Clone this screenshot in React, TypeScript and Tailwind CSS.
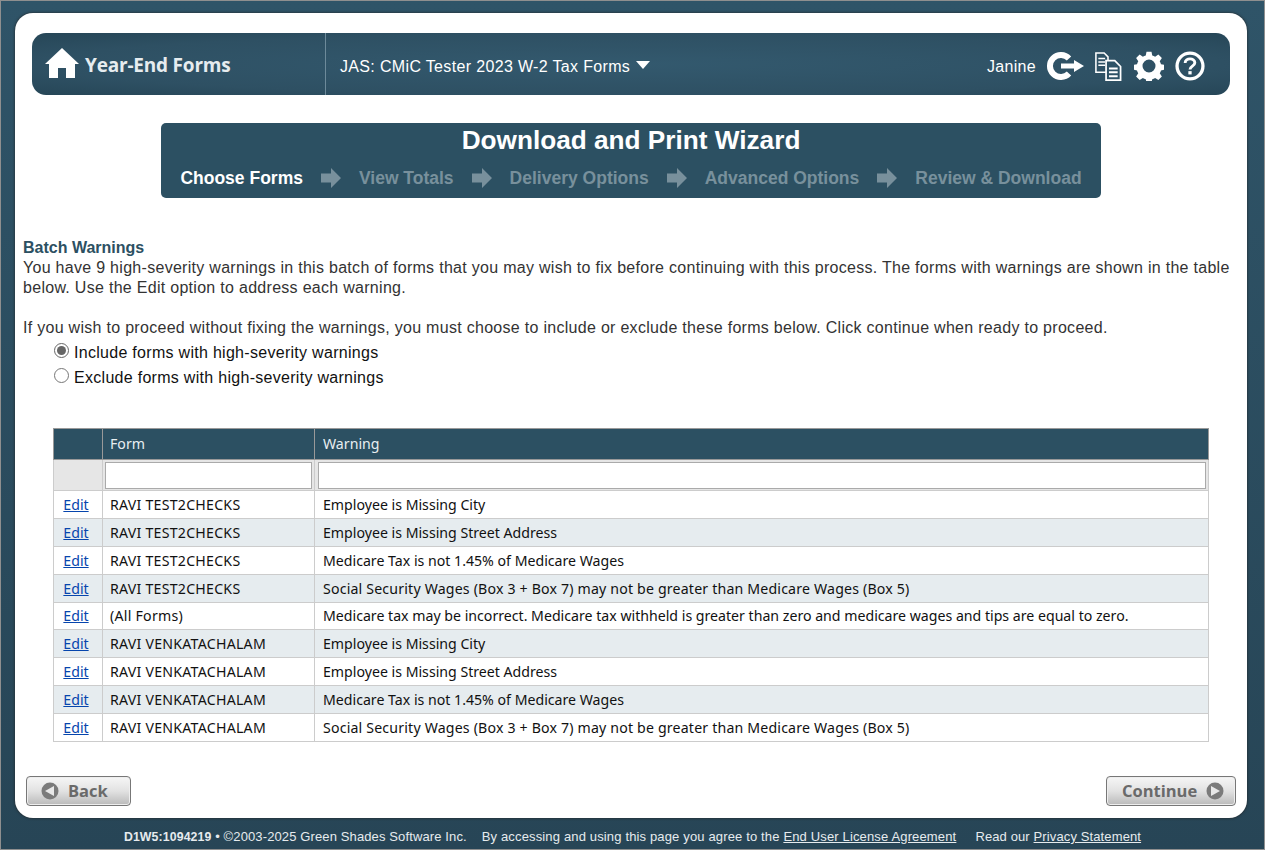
import type { ReactNode } from 'react';

const steps = ['View Totals', 'Delivery Options', 'Advanced Options', 'Review & Download'];

const rows = [
  ['RAVI TEST2CHECKS', 'Employee is Missing City'],
  ['RAVI TEST2CHECKS', 'Employee is Missing Street Address'],
  ['RAVI TEST2CHECKS', 'Medicare Tax is not 1.45% of Medicare Wages'],
  ['RAVI TEST2CHECKS', 'Social Security Wages (Box 3 + Box 7) may not be greater than Medicare Wages (Box 5)'],
  ['(All Forms)', 'Medicare tax may be incorrect. Medicare tax withheld is greater than zero and medicare wages and tips are equal to zero.'],
  ['RAVI VENKATACHALAM', 'Employee is Missing City'],
  ['RAVI VENKATACHALAM', 'Employee is Missing Street Address'],
  ['RAVI VENKATACHALAM', 'Medicare Tax is not 1.45% of Medicare Wages'],
  ['RAVI VENKATACHALAM', 'Social Security Wages (Box 3 + Box 7) may not be greater than Medicare Wages (Box 5)'],
];

function HomeIcon() {
  return (
    <svg width="34" height="30" viewBox="0 0 34 30" className="-mt-[3px] shrink-0">
      <path fill="#fff" d="M17 0 L34 16 L30 16 L30 30 L21 30 L21 20 L13 20 L13 30 L4 30 L4 16 L0 16 Z" />
    </svg>
  );
}

function LogoutIcon() {
  return (
    <svg width="38" height="28" viewBox="0 0 38 28" className="-ml-[1px]">
      <path fill="none" stroke="#fff" strokeWidth="6" d="M23 6.5 A11 11 0 1 0 23 21.5" />
      <path fill="#fff" d="M15 11.5 H28 V8 L38 14 L28 20 V16.5 H15 Z" />
    </svg>
  );
}

function DocsIcon() {
  return (
    <svg width="28" height="29" viewBox="0 0 28 30">
      <path fill="none" stroke="#fff" strokeWidth="1.6" d="M1.5 1 H10 L14 5 V21 H1.5 Z" />
      <path fill="#fff" d="M4 6 H11 V7.5 H4 Z M4 9.5 H11 V11 H4 Z M4 13 H11 V14.5 H4 Z" />
      <path fill="#2d5266" stroke="#fff" strokeWidth="1.8" d="M12 9 H21 L27 15 V29 H12 Z" />
      <path fill="#fff" d="M15 16 H24 V18 H15 Z M15 20 H24 V22 H15 Z M15 24 H24 V26 H15 Z" />
    </svg>
  );
}

function GearIcon() {
  return (
    <svg width="30" height="30" viewBox="0 0 24 24">
      <path
        fill="#fff"
        fillRule="evenodd"
        d="M10 0.5 h4 l0.6 3 a8.7 8.7 0 0 1 2.3 1 l2.6 -1.7 2.8 2.8 -1.7 2.6 a8.7 8.7 0 0 1 1 2.3 l3 0.6 v3.8 l-3 0.6 a8.7 8.7 0 0 1 -1 2.3 l1.7 2.6 -2.8 2.8 -2.6 -1.7 a8.7 8.7 0 0 1 -2.3 1 l-0.6 3 h-4 l-0.6 -3 a8.7 8.7 0 0 1 -2.3 -1 l-2.6 1.7 -2.8 -2.8 1.7 -2.6 a8.7 8.7 0 0 1 -1 -2.3 l-3 -0.6 v-3.8 l3 -0.6 a8.7 8.7 0 0 1 1 -2.3 l-1.7 -2.6 2.8 -2.8 2.6 1.7 a8.7 8.7 0 0 1 2.3 -1 Z M12 6.8 a5.2 5.2 0 1 0 0 10.4 a5.2 5.2 0 1 0 0 -10.4 Z"
      />
    </svg>
  );
}

function HelpIcon() {
  return (
    <svg width="30" height="30" viewBox="0 0 31 31">
      <circle cx="15.5" cy="15.5" r="13.4" fill="none" stroke="#fff" strokeWidth="3.4" />
      <path fill="none" stroke="#fff" strokeWidth="3" d="M10.5 12.5 C10.5 6.8 20.5 6.8 20.5 12.2 C20.5 15.6 15.5 15.6 15.5 19" />
      <rect x="13.8" y="20.8" width="3.4" height="3.4" fill="#fff" />
    </svg>
  );
}

function StepArrow() {
  return (
    <svg width="20" height="20" viewBox="0 0 19 20" className="shrink-0" preserveAspectRatio="none">
      <path fill="#78909c" d="M0 5.5 H9.5 V0 L19 10 L9.5 20 V14.5 H0 Z" />
    </svg>
  );
}

function NavButton({ className, children }: { className: string; children: ReactNode }) {
  return (
    <button
      className={`flex h-[30px] items-center gap-[9px] rounded-[4px] border border-[#777] bg-gradient-to-b from-[#f6f6f6] via-[#e2e2e2] to-[#bababa] font-['Open_Sans',sans-serif] text-[16.5px] font-bold text-[#6a6a6a] shadow-[inset_0_0_0_1px_#eee] ${className}`}
    >
      {children}
    </button>
  );
}

function Circle({ left }: { left?: boolean }) {
  return (
    <svg width="18" height="18" viewBox="0 0 18 18">
      <circle cx="9" cy="9" r="8.5" fill="#7b7b7b" />
      <path fill="#e8e8e8" d={left ? 'M13 4 V14 L4 9 Z' : 'M5 4 V14 L14 9 Z'} />
    </svg>
  );
}

export default function App() {
  return (
    <div className="flex h-[850px] w-[1265px] flex-col overflow-hidden border border-[#8f8f8f] bg-gradient-to-b from-[#2f5468] to-[#274556] font-['Liberation_Sans',sans-serif]">
      <main className="mx-[14px] mt-[12px] flex h-[805px] w-[1232px] flex-col rounded-[18px] bg-white pt-[20px] shadow-[0_0_3px_#222]">
        <header className="mx-[17px] flex h-[62px] w-[1198px] shrink-0 items-center rounded-[14px] bg-[radial-gradient(ellipse_at_center,#33596e_0%,#2e5063_70%,#264657_100%)] pt-[6px] text-white">
          <div className="-mt-[6px] flex h-[62px] w-[294px] items-center gap-[6px] border-r border-[#6d8a9a] pl-[13px]">
            <HomeIcon />
            <span className="pt-[2px] font-['Open_Sans',sans-serif] text-[19px] font-bold tracking-[-0.2px] text-[#e6ecef]">Year-End Forms</span>
          </div>
          <div className="flex items-center gap-[6px] pl-[14px] text-[16px] tracking-[0.34px]">
            JAS: CMiC Tester 2023 W-2 Tax Forms
            <span className="-mt-[4px] h-0 w-0 border-x-[7px] border-t-[8px] border-x-transparent border-t-white" />
          </div>
          <div className="ml-auto -mt-[2px] flex items-center pr-[25px]">
            <span className="mt-[2px] mr-[11px] text-[16px] tracking-[0.3px]">Janine</span>
            <LogoutIcon />
            <span className="ml-[10px]"><DocsIcon /></span>
            <span className="ml-[12px]"><GearIcon /></span>
            <span className="ml-[11px]"><HelpIcon /></span>
          </div>
        </header>

        <section className="mx-auto mt-[28px] flex h-[75px] w-[940px] shrink-0 flex-col items-center rounded-[5px] bg-[#2c5062] pt-[1px]">
          <h1 className="text-[26.2px] leading-[32px] font-bold text-white">Download and Print Wizard</h1>
          <div className="mt-[10px] flex items-center gap-[18px] text-[17.5px] leading-[24px] font-bold">
            <span className="text-white">Choose Forms</span>
            {steps.map((step) => (
              <div key={step} className="flex items-center gap-[18px]">
                <StepArrow />
                <span className="text-[#78909c]">{step}</span>
              </div>
            ))}
          </div>
        </section>

        <section className="mt-[40px] pr-[8px] pl-[8px] text-[16px] leading-[20px] tracking-[0.29px] text-[#333]">
          <h2 className="font-bold tracking-normal text-[#2c5062]">Batch Warnings</h2>
          <p>
            You have 9 high-severity warnings in this batch of forms that you may wish to fix before continuing with this process. The forms with warnings are shown in the table below. Use the Edit option to address each warning.
          </p>
          <p className="mt-[20px]">
            If you wish to proceed without fixing the warnings, you must choose to include or exclude these forms below. Click continue when ready to proceed.
          </p>
          <div className="mt-[2px] ml-[31px] text-[#111]">
            <label className="flex h-[25px] items-center gap-[5px]">
              <input type="radio" name="sev" defaultChecked className="m-0 h-[15px] w-[15px] -translate-y-[2px] accent-[#666]" />
              Include forms with high-severity warnings
            </label>
            <label className="flex h-[25px] items-center gap-[5px]">
              <input type="radio" name="sev" className="m-0 h-[15px] w-[15px] -translate-y-[2px]" />
              Exclude forms with high-severity warnings
            </label>
          </div>
        </section>

        <table className="mt-[38px] ml-[38px] w-[1156px] shrink-0 table-fixed border-collapse border border-[#999] font-['Noto_Sans',sans-serif] text-[14.15px] text-[#111]">
          <colgroup>
            <col className="w-[49px]" />
            <col className="w-[212px]" />
            <col />
          </colgroup>
          <thead>
            <tr className="h-[31px] bg-[#2c5062] text-left text-[#e8eef1]">
              <th className="border border-[#999]" />
              <th className="border border-[#999] pb-[1px] pl-[7px] font-normal">Form</th>
              <th className="border border-[#999] pb-[1px] pl-[8px] font-normal">Warning</th>
            </tr>
            <tr className="h-[31px] bg-[#e6e6e6]">
              <th className="border border-[#ccc]" />
              <th className="border border-[#ccc] px-[2px]">
                <input className="block h-[27px] w-full border border-[#aaa] bg-white" />
              </th>
              <th className="border border-[#ccc] pr-[2px] pl-[3px]">
                <input className="block h-[27px] w-full border border-[#aaa] bg-white" />
              </th>
            </tr>
          </thead>
          <tbody>
            {rows.map(([form, warning], i) => (
              <tr key={i} className={i % 2 ? 'h-[27.9px] bg-[#e6ecef]' : 'h-[27.9px] bg-white'}>
                <td className="border border-[#ccc] pr-[4px] text-center">
                  <a href="#" className="text-[#0645ad] underline">Edit</a>
                </td>
                <td className="border border-[#ccc] pl-[7px] tracking-[0.25px]">{form}</td>
                <td className={warning.startsWith('Social') ? 'border border-[#ccc] pl-[8px] tracking-[0.18px]' : 'border border-[#ccc] pl-[8px]'}>{warning}</td>
              </tr>
            ))}
          </tbody>
        </table>

        <div className="mt-auto mb-[12px] flex justify-between px-[11px]">
          <NavButton className="w-[105px] pl-[14px]">
            <Circle left />Back
          </NavButton>
          <NavButton className="w-[130px] pl-[15px]">
            Continue<Circle />
          </NavButton>
        </div>
      </main>
      <footer className="mt-[12px] flex justify-center gap-[15px] text-[13px] leading-[14px] text-[#e6ebee]">
        <span className="tracking-[0.12px]"><b className="text-[12.3px] font-bold">D1W5:1094219</b> • ©2003-2025 Green Shades Software Inc.</span>
        <span className="tracking-[0.15px]">By accessing and using this page you agree to the <a href="#" className="underline">End User License Agreement</a></span>
        <span className="ml-[4px] tracking-[0.12px]">Read our <a href="#" className="underline">Privacy Statement</a></span>
      </footer>
    </div>
  );
}
